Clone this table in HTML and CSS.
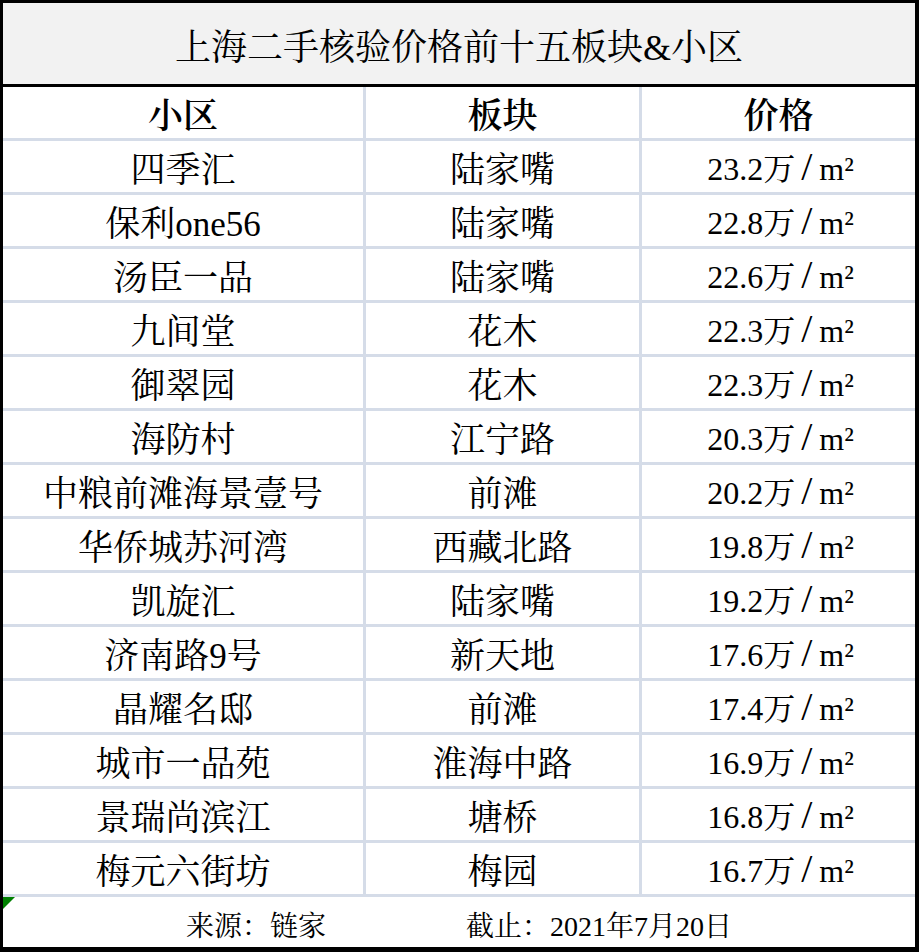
FILE: index.html
```html
<!DOCTYPE html>
<html lang="zh-CN">
<head>
<meta charset="utf-8">
<title>上海二手核验价格前十五板块&amp;小区</title>
<link rel="stylesheet" href="styles.css">
</head>
<body>
<div class="sheet">
  <div class="title">上海二手核验价格前十五板块&amp;小区</div>
  <div class="grid">
    <div class="cell head">小区</div><div class="cell head">板块</div><div class="cell head">价格</div>
    <div class="cell">四季汇</div><div class="cell">陆家嘴</div><div class="cell price">23.2万<span class="sl">/</span>m²</div>
    <div class="cell">保利one56</div><div class="cell">陆家嘴</div><div class="cell price">22.8万<span class="sl">/</span>m²</div>
    <div class="cell">汤臣一品</div><div class="cell">陆家嘴</div><div class="cell price">22.6万<span class="sl">/</span>m²</div>
    <div class="cell">九间堂</div><div class="cell">花木</div><div class="cell price">22.3万<span class="sl">/</span>m²</div>
    <div class="cell">御翠园</div><div class="cell">花木</div><div class="cell price">22.3万<span class="sl">/</span>m²</div>
    <div class="cell">海防村</div><div class="cell">江宁路</div><div class="cell price">20.3万<span class="sl">/</span>m²</div>
    <div class="cell">中粮前滩海景壹号</div><div class="cell">前滩</div><div class="cell price">20.2万<span class="sl">/</span>m²</div>
    <div class="cell">华侨城苏河湾</div><div class="cell">西藏北路</div><div class="cell price">19.8万<span class="sl">/</span>m²</div>
    <div class="cell">凯旋汇</div><div class="cell">陆家嘴</div><div class="cell price">19.2万<span class="sl">/</span>m²</div>
    <div class="cell">济南路9号</div><div class="cell">新天地</div><div class="cell price">17.6万<span class="sl">/</span>m²</div>
    <div class="cell">晶耀名邸</div><div class="cell">前滩</div><div class="cell price">17.4万<span class="sl">/</span>m²</div>
    <div class="cell">城市一品苑</div><div class="cell">淮海中路</div><div class="cell price">16.9万<span class="sl">/</span>m²</div>
    <div class="cell">景瑞尚滨江</div><div class="cell">塘桥</div><div class="cell price">16.8万<span class="sl">/</span>m²</div>
    <div class="cell">梅元六街坊</div><div class="cell">梅园</div><div class="cell price">16.7万<span class="sl">/</span>m²</div>
  </div>
  <div class="footer">
    <span class="corner"></span>
    <span>来源：链家</span>
    <span>截止：2021年7月20日</span>
  </div>
</div>
</body>
</html>
```

FILE: styles.css
```css
html, body {
  margin: 0;
  padding: 0;
  background: #ffffff;
}

.sheet {
  box-sizing: border-box;
  width: 919px;
  height: 952px;
  border-style: solid;
  border-color: #000000;
  border-width: 3px 4px 5px 3px;
  display: flex;
  flex-direction: column;
  font-family: "Liberation Serif", "Noto Serif CJK SC", "Noto Sans CJK SC", serif;
  color: #000000;
}

.title {
  box-sizing: border-box;
  height: 84px;
  padding-top: 2px;
  background: #f2f2f2;
  border-bottom: 3px solid #000000;
  display: flex;
  align-items: center;
  justify-content: center;
  font-size: 36px;
}

.grid {
  display: grid;
  grid-template-columns: 360px 273px 273px;
  grid-auto-rows: 51px;
  gap: 3px;
  padding-bottom: 3px;
  background: #d5dce8;
}

.cell {
  background: #ffffff;
  display: flex;
  align-items: center;
  justify-content: center;
  font-size: 35px;
  white-space: nowrap;
}

.head {
  font-weight: 600;
}

.price {
  font-size: 32px;
  padding-left: 4px;
  align-items: baseline;
  padding-top: 2px;
  box-sizing: border-box;
}

.sl {
  font-size: 40px;
  margin: 0 7px 0 6px;
}

.footer {
  position: relative;
  flex: 1;
  box-sizing: border-box;
  padding-top: 4px;
  display: flex;
  align-items: center;
  justify-content: center;
  gap: 140px;
  font-size: 28px;
}

.corner {
  position: absolute;
  left: 0;
  top: 0;
  width: 0;
  height: 0;
  border-top: 12px solid #008000;
  border-right: 12px solid transparent;
}
```
